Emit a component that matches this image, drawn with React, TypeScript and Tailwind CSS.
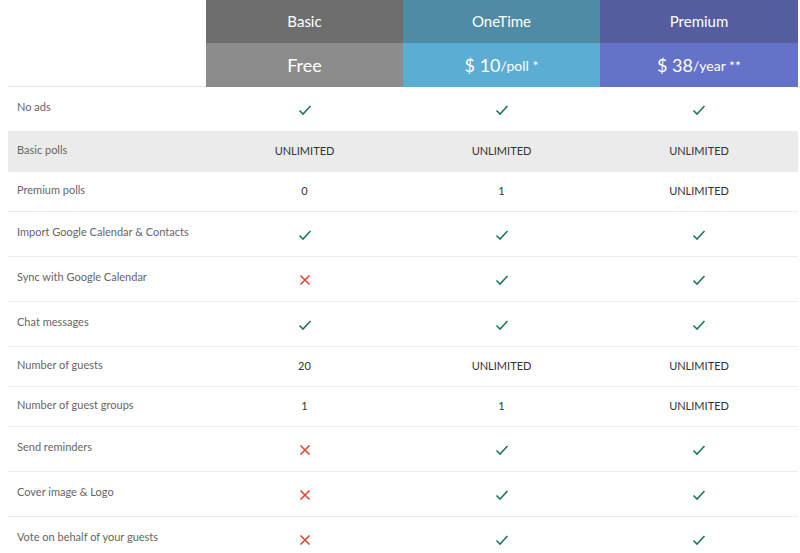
import React from "react";

const Check = () => (
  <svg width="14" height="12" viewBox="0 0 14 12" className="inline-block"><path d="M1.5 6.5 L5 10 L12.5 2" fill="none" stroke="#1d7a4f" strokeWidth="1.6" /></svg>
);
const Cross = () => (
  <svg width="12" height="12" viewBox="0 0 12 12" className="inline-block"><path d="M1.5 1.5 L10.5 10.5 M10.5 1.5 L1.5 10.5" fill="none" stroke="#e0452f" strokeWidth="1.6" /></svg>
);

type V = "c" | "x" | string;
const rows: [string, V, V, V, boolean?][] = [
  ["No ads", "c", "c", "c"],
  ["Basic polls", "UNLIMITED", "UNLIMITED", "UNLIMITED", true],
  ["Premium polls", "0", "1", "UNLIMITED"],
  ["Import Google Calendar & Contacts", "c", "c", "c"],
  ["Sync with Google Calendar", "x", "c", "c"],
  ["Chat messages", "c", "c", "c"],
  ["Number of guests", "20", "UNLIMITED", "UNLIMITED"],
  ["Number of guest groups", "1", "1", "UNLIMITED"],
  ["Send reminders", "x", "c", "c"],
  ["Cover image & Logo", "x", "c", "c"],
  ["Vote on behalf of your guests", "x", "c", "c"],
];

const cell = (v: V) => (v === "c" ? <Check /> : v === "x" ? <Cross /> : <span>{v}</span>);

export default function App() {
  return (
    <div className="w-[800px] h-[553px] overflow-hidden bg-white" style={{ fontFamily: "Lato, 'Open Sans', sans-serif" }}>
      <div className="ml-[8px] w-[790px]">
        <div className="grid grid-cols-[198px_197px_197px_198px] text-white text-center">
          <div className="row-span-2 border-b border-[#e6e6e6]" />
          <div className="h-[43px] flex items-center justify-center text-[15px] bg-[#6e6e6e]">Basic</div>
          <div className="h-[43px] flex items-center justify-center text-[15px] bg-[#4f8ba4]">OneTime</div>
          <div className="h-[43px] flex items-center justify-center text-[15px] bg-[#555d9f]">Premium</div>
          <div className="h-[44px] flex items-center justify-center text-[18px] bg-[#8c8c8c]">Free</div>
          <div className="h-[44px] flex items-center justify-center text-[18px] bg-[#5cadd4]">$ 10<span className="text-[14px]">/poll *</span></div>
          <div className="h-[44px] flex items-center justify-center text-[18px] bg-[#6572c9]">$ 38<span className="text-[14px]">/year **</span></div>
        </div>
        {rows.map(([label, a, b, c, gray], i) => {
          const isText = [a, b, c].every((v) => v !== "c" && v !== "x");
          return (
            <div
              key={i}
              className={`grid grid-cols-[198px_197px_197px_198px] items-center text-[11px] border-b border-[#ececec] ${isText ? "h-[40px]" : "h-[45px]"} ${gray ? "bg-[#ebebeb]" : ""}`}
            >
              <div className="pl-[9px] text-[#666] pb-[3px]">{label}</div>
              <div className="text-center text-[#333]">{cell(a)}</div>
              <div className="text-center text-[#333]">{cell(b)}</div>
              <div className="text-center text-[#333]">{cell(c)}</div>
            </div>
          );
        })}
      </div>
    </div>
  );
}
